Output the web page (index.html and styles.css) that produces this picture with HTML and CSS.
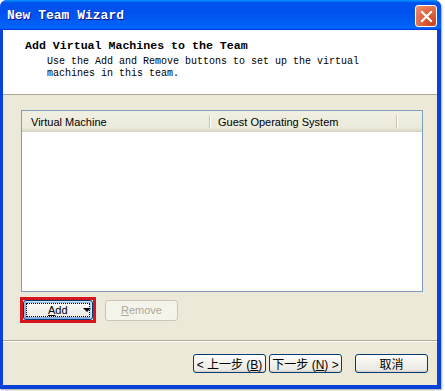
FILE: index.html
```html
<!DOCTYPE html>
<html lang="en">
<head>
  <meta charset="UTF-8" />
  <title>New Team Wizard</title>
  <link rel="stylesheet" href="styles.css">
</head>
<body>

  <div class="window">
    <div class="titlebar">
      <span class="title">New Team Wizard</span>
      <button class="close-btn" aria-label="Close">
        <svg width="13" height="13" viewBox="0 0 13 13">
          <path d="M2 2 L11 11 M11 2 L2 11" stroke="#fff" stroke-width="2.2" stroke-linecap="square"/>
        </svg>
      </button>
    </div>

    <div class="client">
      <div class="wizard-header">
        <h2>Add Virtual Machines to the Team</h2>
        <p>Use the Add and Remove buttons to set up the virtual<br>machines in this team.</p>
      </div>

      <div class="wizard-body">
        <div class="listview">
          <div class="list-head">
            <div class="col col-vm">Virtual Machine</div>
            <div class="col col-os">Guest Operating System</div>
            <div class="col col-rest"></div>
          </div>
          <div class="list-rows"></div>
        </div>

        <div class="list-actions">
          <div class="highlight">
            <button class="btn btn-focus btn-add"><span class="focus-rect"><span><u>A</u>dd</span><span class="arrow"></span></span></button>
          </div>
          <button class="btn btn-disabled" disabled><u>R</u>emove</button>
        </div>
      </div>

      <div class="wizard-footer">
        <button class="btn btn-cjk">&lt; 上一步 (<u>B</u>)</button>
        <button class="btn btn-cjk">下一步 (<u>N</u>) &gt;</button>
        <button class="btn btn-cjk btn-cancel">取消</button>
      </div>
    </div>
  </div>

</body>
</html>
```

FILE: styles.css
```css
* {
  margin: 0;
  padding: 0;
  box-sizing: border-box;
}

html, body {
  height: 100%;
}

body {
  background: #fff;
  font-family: 'Liberation Sans', Arial, sans-serif;
}

.window {
  width: 441px;
  height: 389px;
  background: #0842d8;
  border-radius: 7px 7px 0 0;
  box-shadow: 1px 1px 2px rgba(0, 0, 0, 0.35);
  display: flex;
  flex-direction: column;
}

.titlebar {
  height: 30px;
  flex-shrink: 0;
  border-radius: 7px 7px 0 0;
  background: linear-gradient(180deg, #0997ff 0%, #0053ee 9%, #0050ee 40%, #0062f6 86%, #0066ff 93%, #005bff 95%, #003dd7 97%, #003dd7 100%);
  display: flex;
  align-items: center;
  padding: 0 4px 0 7px;
}

.title {
  flex: 1;
  color: #fff;
  font-family: 'Liberation Mono', 'DejaVu Sans Mono', monospace;
  font-weight: bold;
  font-size: 13px;
  text-shadow: 1px 1px #0f1089;
  margin-top: 1px;
}

.close-btn {
  width: 22px;
  height: 22px;
  margin-top: 2px;
  border: 1px solid #fff;
  border-radius: 3px;
  background: radial-gradient(circle at 80% 85%, #c8431f 0%, #e06a45 55%, #ee9474 100%);
  display: flex;
  align-items: center;
  justify-content: center;
}

.client {
  flex: 1;
  margin: 0 4px 4px 3px;
  background: #ece9d8;
  display: flex;
  flex-direction: column;
}

.wizard-header {
  height: 65px;
  background: #fff;
  border-bottom: 1px solid #aca899;
  padding: 9px 0 0 22px;
  font-family: 'Liberation Mono', 'DejaVu Sans Mono', monospace;
}

.wizard-header h2 {
  font-size: 11.6px;
  font-weight: bold;
  line-height: 13px;
  margin-bottom: 4px;
}

.wizard-header p {
  font-size: 10px;
  line-height: 12px;
  padding-left: 22px;
}

.wizard-body {
  height: 246px;
  padding: 15px 14px 0 18px;
  border-bottom: 1px solid #aca899;
}

.listview {
  height: 182px;
  background: #fff;
  border: 1px solid #7f9db9;
  display: flex;
  flex-direction: column;
}

.list-head {
  height: 21px;
  display: flex;
  background: linear-gradient(180deg, #f1efe2 0%, #ebeadb 80%, #e2decd 90%, #d6d2c2 100%);
  font-size: 11px;
  color: #000;
}

.col {
  display: flex;
  align-items: center;
  padding-left: 9px;
  position: relative;
}

.col-vm {
  width: 188px;
}

.col-os {
  width: 187px;
  padding-left: 8px;
}

.col-rest {
  flex: 1;
}

.col-vm::after,
.col-os::after {
  content: '';
  position: absolute;
  right: 0;
  top: 4px;
  bottom: 4px;
  width: 1px;
  background: #c7c5b2;
  box-shadow: 1px 0 #fff;
}

.list-rows {
  flex: 1;
}

.list-actions {
  display: flex;
  align-items: center;
  margin-top: 5px;
  margin-left: -1px;
}

.highlight {
  border: 3px solid #d8141c;
  width: 76px;
  height: 26px;
  display: flex;
}

.btn {
  font-family: 'Liberation Sans', Arial, sans-serif;
  font-size: 11px;
  color: #000;
  height: 20px;
  border: 1px solid #003c74;
  border-radius: 3px;
  background: linear-gradient(180deg, #fff 0%, #f4f3ee 40%, #ecebe6 86%, #d6d0c5 100%);
}

.btn-focus {
  width: 70px;
  height: 20px;
  box-shadow: inset -1px 1px #cee7ff, inset 1px 2px #98b8ea, inset -2px 0 #bcd4f6, inset 1px 1px #89ade4, inset 2px -2px #89ade4;
  padding: 2px;
}

.focus-rect {
  display: flex;
  align-items: center;
  height: 100%;
  border: 1px dotted #000;
  padding-left: 21px;
  gap: 15px;
}

.arrow {
  width: 0;
  height: 0;
  border-left: 4px solid transparent;
  border-right: 4px solid transparent;
  border-top: 4px solid #000;
}

.btn-disabled {
  width: 73px;
  height: 21px;
  margin-left: 9px;
  border-color: #c9c7ba;
  color: #aca899;
  background: #f5f4ea;
}

.wizard-footer {
  flex: 1;
  border-top: 1px solid #fff;
  display: flex;
  justify-content: flex-end;
  align-items: flex-start;
  padding: 12px 9px 0 0;
}

.btn-cjk {
  font-family: 'Liberation Sans', 'Noto Sans CJK SC', sans-serif;
  font-size: 12px;
  width: 73px;
  height: 19px;
  border-radius: 3px;
  padding: 0;
}

.btn-cjk + .btn-cjk {
  margin-left: 3px;
}

.btn-cancel {
  margin-left: 13px !important;
}
```
